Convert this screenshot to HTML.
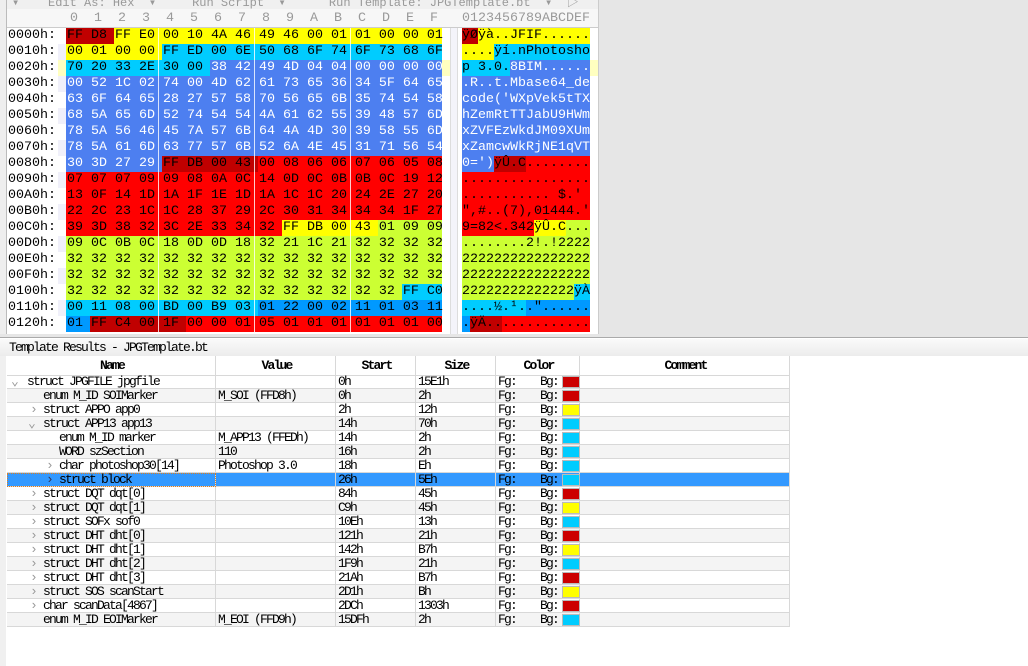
<!DOCTYPE html>
<html><head><meta charset="utf-8">
<style>
*{margin:0;padding:0;box-sizing:border-box}
body{width:1028px;height:666px;overflow:hidden;background:#fff;position:relative;font-family:"Liberation Mono","Noto Sans CJK SC",monospace}
.abs{position:absolute}
.hx{position:absolute;font-size:13.33px;line-height:16px;white-space:pre;color:#000;left:67px}
.as{position:absolute;font-size:13.33px;line-height:16px;white-space:pre;color:#000;left:462px}
.ad{position:absolute;left:8px;font-size:13.33px;line-height:16px;color:#000}
.w{color:#fff}
.tr{position:absolute;left:7px;width:783px;height:14px;border-bottom:1px solid #d8d8d8;font-size:13px;letter-spacing:-1.8px;line-height:14px}
.tr div{position:absolute;top:0;height:14px;border-right:1px solid #d8d8d8;white-space:pre;padding-left:2px}
.c1{left:0;width:209px}.c2{left:209px;width:120px}.c3{left:329px;width:80px}.c4{left:409px;width:80px}.c5{left:489px;width:84px}.c6{left:573px;width:210px}
.ar{position:absolute;color:#999;font-size:13px;top:0}
.sw{position:absolute;left:66px;top:1px;width:18px;height:12px;border:1px solid #bbb}
.odd{background:#f4f4f4}
</style></head><body>
<div class="abs" style="left:0;top:0;width:1028px;height:9px;background:#f0f0f0;overflow:hidden">
<div class="abs" style="left:12px;top:-7px;font-size:12px;color:#999;white-space:pre">▾    Edit As: Hex  ▾     Run Script  ▾      Run Template: JPGTemplate.bt  ▾  ▷</div></div>
<div class="abs" style="left:0;top:9px;width:600px;height:19px;background:#f7f7f7;border-bottom:1px solid #ccc"></div>
<div class="abs" style="left:6px;top:0;width:1px;height:334px;background:#bbb"></div>
<div class="abs" style="left:0;top:0;width:6px;height:334px;background:#eee"></div>
<div class="abs" style="left:598px;top:0;width:430px;height:334px;background:#e6e6e6;border-left:1px solid #ccc"></div>
<div id="hdr" class="abs" style="left:0;top:11px;font-size:13.33px;color:#999;line-height:16px"></div>
<div class="abs" style="left:462px;top:11px;font-size:13.33px;color:#999;line-height:16px;white-space:pre">0123456789ABCDEF</div>
<div class="abs" style="left:450px;top:28px;width:8px;height:306px;background:#f4f4fa;border-left:1px solid #ddd;border-right:1px solid #ddd"></div>
<div id="bg"></div>
<div class="ad" style="top:28px">0000h:</div><div class="ad" style="top:44px">0010h:</div><div class="ad" style="top:60px">0020h:</div><div class="ad" style="top:76px">0030h:</div><div class="ad" style="top:92px">0040h:</div><div class="ad" style="top:108px">0050h:</div><div class="ad" style="top:124px">0060h:</div><div class="ad" style="top:140px">0070h:</div><div class="ad" style="top:156px">0080h:</div><div class="ad" style="top:172px">0090h:</div><div class="ad" style="top:188px">00A0h:</div><div class="ad" style="top:204px">00B0h:</div><div class="ad" style="top:220px">00C0h:</div><div class="ad" style="top:236px">00D0h:</div><div class="ad" style="top:252px">00E0h:</div><div class="ad" style="top:268px">00F0h:</div><div class="ad" style="top:284px">0100h:</div><div class="ad" style="top:300px">0110h:</div><div class="ad" style="top:316px">0120h:</div>
<div class="hx" style="top:28px">FF D8 FF E0 00 10 4A 46 49 46 00 01 01 00 00 01</div>
<div class="hx" style="top:44px">00 01 00 00 FF ED 00 6E 50 68 6F 74 6F 73 68 6F</div>
<div class="hx" style="top:60px">70 20 33 2E 30 00 <span class="w">38 42 49 4D 04 04 00 00 00 00</span></div>
<div class="hx w" style="top:76px">00 52 1C 02 74 00 4D 62 61 73 65 36 34 5F 64 65</div>
<div class="hx w" style="top:92px">63 6F 64 65 28 27 57 58 70 56 65 6B 35 74 54 58</div>
<div class="hx w" style="top:108px">68 5A 65 6D 52 74 54 54 4A 61 62 55 39 48 57 6D</div>
<div class="hx w" style="top:124px">78 5A 56 46 45 7A 57 6B 64 4A 4D 30 39 58 55 6D</div>
<div class="hx w" style="top:140px">78 5A 61 6D 63 77 57 6B 52 6A 4E 45 31 71 56 54</div>
<div class="hx" style="top:156px"><span class="w">30 3D 27 29</span> FF DB 00 43 00 08 06 06 07 06 05 08</div>
<div class="hx" style="top:172px">07 07 07 09 09 08 0A 0C 14 0D 0C 0B 0B 0C 19 12</div>
<div class="hx" style="top:188px">13 0F 14 1D 1A 1F 1E 1D 1A 1C 1C 20 24 2E 27 20</div>
<div class="hx" style="top:204px">22 2C 23 1C 1C 28 37 29 2C 30 31 34 34 34 1F 27</div>
<div class="hx" style="top:220px">39 3D 38 32 3C 2E 33 34 32 FF DB 00 43 01 09 09</div>
<div class="hx" style="top:236px">09 0C 0B 0C 18 0D 0D 18 32 21 1C 21 32 32 32 32</div>
<div class="hx" style="top:252px">32 32 32 32 32 32 32 32 32 32 32 32 32 32 32 32</div>
<div class="hx" style="top:268px">32 32 32 32 32 32 32 32 32 32 32 32 32 32 32 32</div>
<div class="hx" style="top:284px">32 32 32 32 32 32 32 32 32 32 32 32 32 32 FF C0</div>
<div class="hx" style="top:300px">00 11 08 00 BD 00 B9 03 01 22 00 02 11 01 03 11</div>
<div class="hx" style="top:316px">01 FF C4 00 1F 00 00 01 05 01 01 01 01 01 01 00</div>
<div class="as" style="top:28px">ÿØÿà..JFIF......</div>
<div class="as" style="top:44px">....ÿí.nPhotosho</div>
<div class="as" style="top:60px">p 3.0.<span class="w">8BIM......</span></div>
<div class="as w" style="top:76px">.R..t.Mbase64_de</div>
<div class="as w" style="top:92px">code('WXpVek5tTX</div>
<div class="as w" style="top:108px">hZemRtTTJabU9HWm</div>
<div class="as w" style="top:124px">xZVFEzWkdJM09XUm</div>
<div class="as w" style="top:140px">xZamcwWkRjNE1qVT</div>
<div class="as" style="top:156px"><span class="w">0=')</span>ÿÛ.C........</div>
<div class="as" style="top:172px">................</div>
<div class="as" style="top:188px">........... $.' </div>
<div class="as" style="top:204px">",#..(7),01444.'</div>
<div class="as" style="top:220px">9=82&lt;.342ÿÛ.C...</div>
<div class="as" style="top:236px">........2!.!2222</div>
<div class="as" style="top:252px">2222222222222222</div>
<div class="as" style="top:268px">2222222222222222</div>
<div class="as" style="top:284px">22222222222222ÿÀ</div>
<div class="as" style="top:300px">....½.¹.."......</div>
<div class="as" style="top:316px">.ÿÄ.............</div>

<div class="abs" style="left:0;top:334px;width:1028px;height:4px;background:#e6e6e6;border-bottom:1px solid #aaa"></div>
<div class="abs" style="left:0;top:339px;width:1028px;height:17px;background:linear-gradient(#fafafa,#ececec);font-size:13px;letter-spacing:-1.8px;padding-left:9px;line-height:17px;white-space:pre">Template Results - JPGTemplate.bt</div>
<div class="abs" style="left:0;top:356px;width:6px;height:310px;background:#f0f0f0"></div>
<div class="tr" style="top:356px;height:20px;font-weight:bold;line-height:20px"><div class="c1" style="height:20px;text-align:center">Name</div><div class="c2" style="height:20px;text-align:center">Value</div><div class="c3" style="height:20px;text-align:center">Start</div><div class="c4" style="height:20px;text-align:center">Size</div><div class="c5" style="height:20px;text-align:center">Color</div><div class="c6" style="height:20px;text-align:center">Comment</div></div>
<script>
var bg=document.getElementById('bg'),h='';
var DR='#c00000',R='#ff0000',Y='#ffff00',C='#00ccff',B='#4d7ff0',L='#ccff33',MB='#0099ff';
function col(i){if(i<2)return DR;if(i<0x14)return Y;if(i<0x26)return C;if(i<0x84)return B;if(i<0x88)return DR;if(i<0xC9)return R;if(i<0xCD)return Y;if(i<0x10E)return L;if(i<0x118)return C;if(i<0x121)return MB;if(i<0x125)return DR;return R;}
for(var r=0;r<19;r++){var t=28+16*r;
 if(r==2){h+='<div class="abs" style="left:58px;top:'+t+'px;width:8px;height:16px;background:#ffffc0"></div><div class="abs" style="left:442px;top:'+t+'px;width:8px;height:16px;background:#ffffc0"></div><div class="abs" style="left:590px;top:'+t+'px;width:8px;height:16px;background:#ffffc0"></div>';}
 else if(r%2==1){h+='<div class="abs" style="left:58px;top:'+t+'px;width:8px;height:16px;background:#f0f0fa"></div>';}
 for(var j=0;j<16;j++){var c=col(r*16+j);var w=j==15?16:24;
  h+='<div class="abs" style="left:'+(66+24*j)+'px;top:'+t+'px;width:'+w+'px;height:16px;background:'+c+'"></div>';
  h+='<div class="abs" style="left:'+(462+8*j)+'px;top:'+t+'px;width:8px;height:16px;background:'+c+'"></div>';}
}
for(var k=1;k<4;k++)h+='<div class="abs" style="left:'+(66+96*k-4)+'px;top:28px;width:1px;height:306px;background:#fff;opacity:.8"></div>';
var hd='';for(var k=0;k<16;k++)hd+='<span style="position:absolute;left:'+(70+24*k)+'px">'+'0123456789ABCDEF'[k]+'</span>';
document.getElementById('hdr').innerHTML=hd;
bg.innerHTML=h;
</script>
<div style="position:absolute;left:0;top:0">
<div class="tr" style="top:375px"><div class="c1"><span class="ar" style="left:4px">⌄</span><span style="position:absolute;left:20px">struct JPGFILE jpgfile</span></div><div class="c2"></div><div class="c3">0h</div><div class="c4">15E1h</div><div class="c5">Fg:    Bg:<span class="sw" style="background:#cc0000"></span></div><div class="c6"></div></div>
<div class="tr odd" style="top:389px"><div class="c1"><span style="position:absolute;left:36px">enum M_ID SOIMarker</span></div><div class="c2">M_SOI (FFD8h)</div><div class="c3">0h</div><div class="c4">2h</div><div class="c5">Fg:    Bg:<span class="sw" style="background:#cc0000"></span></div><div class="c6"></div></div>
<div class="tr" style="top:403px"><div class="c1"><span class="ar" style="left:23px">›</span><span style="position:absolute;left:36px">struct APPO app0</span></div><div class="c2"></div><div class="c3">2h</div><div class="c4">12h</div><div class="c5">Fg:    Bg:<span class="sw" style="background:#ffff00"></span></div><div class="c6"></div></div>
<div class="tr odd" style="top:417px"><div class="c1"><span class="ar" style="left:21px">⌄</span><span style="position:absolute;left:36px">struct APP13 app13</span></div><div class="c2"></div><div class="c3">14h</div><div class="c4">70h</div><div class="c5">Fg:    Bg:<span class="sw" style="background:#00ccff"></span></div><div class="c6"></div></div>
<div class="tr" style="top:431px"><div class="c1"><span style="position:absolute;left:52px">enum M_ID marker</span></div><div class="c2">M_APP13 (FFEDh)</div><div class="c3">14h</div><div class="c4">2h</div><div class="c5">Fg:    Bg:<span class="sw" style="background:#00ccff"></span></div><div class="c6"></div></div>
<div class="tr odd" style="top:445px"><div class="c1"><span style="position:absolute;left:52px">WORD szSection</span></div><div class="c2">110</div><div class="c3">16h</div><div class="c4">2h</div><div class="c5">Fg:    Bg:<span class="sw" style="background:#00ccff"></span></div><div class="c6"></div></div>
<div class="tr" style="top:459px"><div class="c1"><span class="ar" style="left:39px">›</span><span style="position:absolute;left:52px">char photoshop30[14]</span></div><div class="c2">Photoshop 3.0</div><div class="c3">18h</div><div class="c4">Eh</div><div class="c5">Fg:    Bg:<span class="sw" style="background:#00ccff"></span></div><div class="c6"></div></div>
<div class="tr" style="top:473px;background:#3399ff"><div class="c1" style="outline:1px dotted #e08020;outline-offset:-1px"><span class="ar" style="left:39px;color:#335">›</span><span style="position:absolute;left:52px">struct block</span></div><div class="c2"></div><div class="c3">26h</div><div class="c4">5Eh</div><div class="c5">Fg:    Bg:<span class="sw" style="background:#00ccff"></span></div><div class="c6"></div></div>
<div class="tr" style="top:487px"><div class="c1"><span class="ar" style="left:23px">›</span><span style="position:absolute;left:36px">struct DQT dqt[0]</span></div><div class="c2"></div><div class="c3">84h</div><div class="c4">45h</div><div class="c5">Fg:    Bg:<span class="sw" style="background:#cc0000"></span></div><div class="c6"></div></div>
<div class="tr odd" style="top:501px"><div class="c1"><span class="ar" style="left:23px">›</span><span style="position:absolute;left:36px">struct DQT dqt[1]</span></div><div class="c2"></div><div class="c3">C9h</div><div class="c4">45h</div><div class="c5">Fg:    Bg:<span class="sw" style="background:#ffff00"></span></div><div class="c6"></div></div>
<div class="tr" style="top:515px"><div class="c1"><span class="ar" style="left:23px">›</span><span style="position:absolute;left:36px">struct SOFx sof0</span></div><div class="c2"></div><div class="c3">10Eh</div><div class="c4">13h</div><div class="c5">Fg:    Bg:<span class="sw" style="background:#00ccff"></span></div><div class="c6"></div></div>
<div class="tr odd" style="top:529px"><div class="c1"><span class="ar" style="left:23px">›</span><span style="position:absolute;left:36px">struct DHT dht[0]</span></div><div class="c2"></div><div class="c3">121h</div><div class="c4">21h</div><div class="c5">Fg:    Bg:<span class="sw" style="background:#cc0000"></span></div><div class="c6"></div></div>
<div class="tr" style="top:543px"><div class="c1"><span class="ar" style="left:23px">›</span><span style="position:absolute;left:36px">struct DHT dht[1]</span></div><div class="c2"></div><div class="c3">142h</div><div class="c4">B7h</div><div class="c5">Fg:    Bg:<span class="sw" style="background:#ffff00"></span></div><div class="c6"></div></div>
<div class="tr odd" style="top:557px"><div class="c1"><span class="ar" style="left:23px">›</span><span style="position:absolute;left:36px">struct DHT dht[2]</span></div><div class="c2"></div><div class="c3">1F9h</div><div class="c4">21h</div><div class="c5">Fg:    Bg:<span class="sw" style="background:#00ccff"></span></div><div class="c6"></div></div>
<div class="tr" style="top:571px"><div class="c1"><span class="ar" style="left:23px">›</span><span style="position:absolute;left:36px">struct DHT dht[3]</span></div><div class="c2"></div><div class="c3">21Ah</div><div class="c4">B7h</div><div class="c5">Fg:    Bg:<span class="sw" style="background:#cc0000"></span></div><div class="c6"></div></div>
<div class="tr odd" style="top:585px"><div class="c1"><span class="ar" style="left:23px">›</span><span style="position:absolute;left:36px">struct SOS scanStart</span></div><div class="c2"></div><div class="c3">2D1h</div><div class="c4">Bh</div><div class="c5">Fg:    Bg:<span class="sw" style="background:#ffff00"></span></div><div class="c6"></div></div>
<div class="tr" style="top:599px"><div class="c1"><span class="ar" style="left:23px">›</span><span style="position:absolute;left:36px">char scanData[4867]</span></div><div class="c2"></div><div class="c3">2DCh</div><div class="c4">1303h</div><div class="c5">Fg:    Bg:<span class="sw" style="background:#cc0000"></span></div><div class="c6"></div></div>
<div class="tr odd" style="top:613px"><div class="c1"><span style="position:absolute;left:36px">enum M_ID EOIMarker</span></div><div class="c2">M_EOI (FFD9h)</div><div class="c3">15DFh</div><div class="c4">2h</div><div class="c5">Fg:    Bg:<span class="sw" style="background:#00ccff"></span></div><div class="c6"></div></div>
</div>
</body></html>
